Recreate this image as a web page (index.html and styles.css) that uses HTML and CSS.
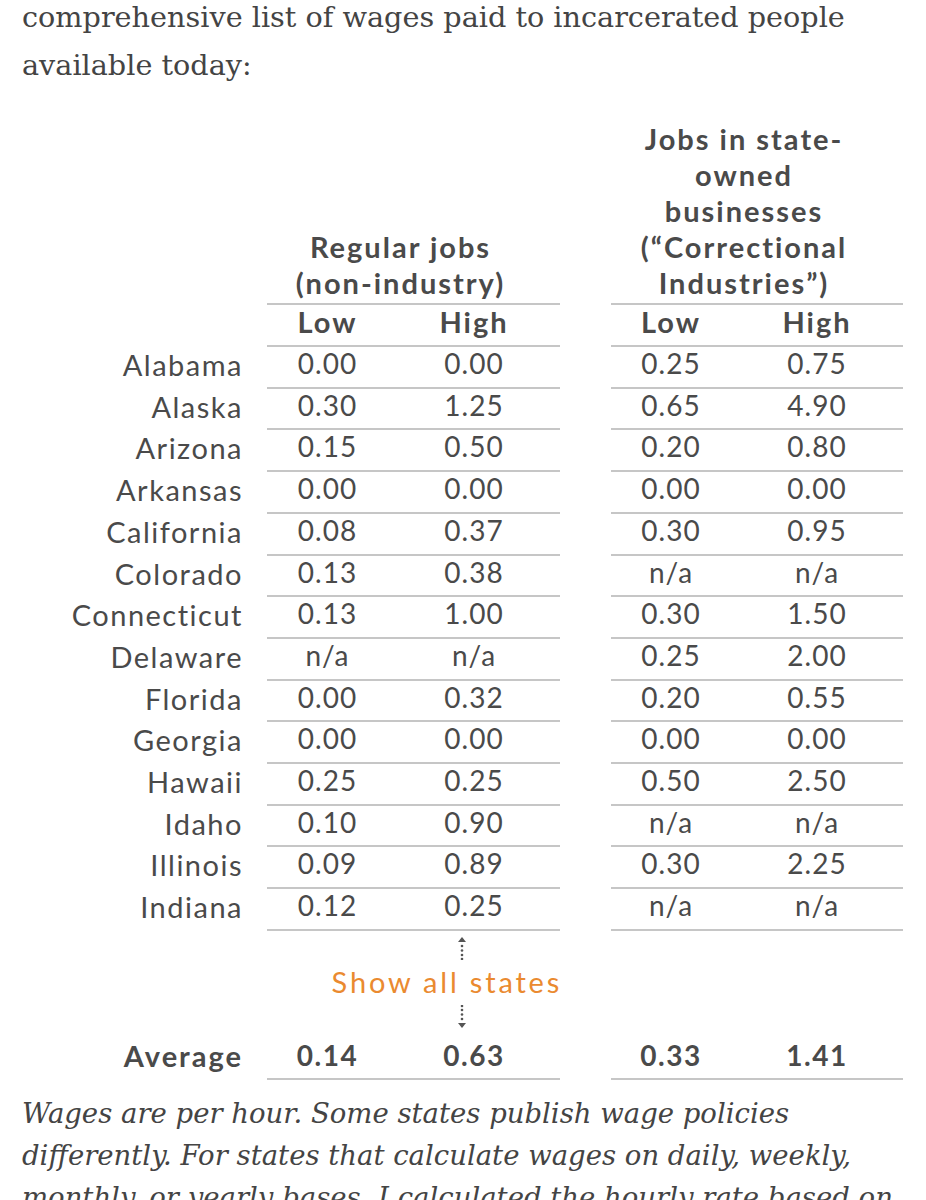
FILE: index.html
```html
<!DOCTYPE html>
<html>
<head>
<meta charset="utf-8">
<link rel="stylesheet" href="styles.css">
</head>
<body>
<div class="page">
  <p class="intro">comprehensive list of wages paid to incarcerated people available today:</p>
  <table class="wages">
    <colgroup>
      <col class="c-state"><col class="c-low"><col class="c-high"><col class="c-sp"><col class="c-low2"><col class="c-high2">
    </colgroup>
    <thead>
      <tr class="groups">
        <th class="state"></th>
        <th class="group" colspan="2">Regular jobs<br>(non-industry)</th>
        <th class="sp"></th>
        <th class="group" colspan="2">Jobs in state-<br>owned<br>businesses<br>(“Correctional<br>Industries”)</th>
      </tr>
      <tr class="sub">
        <th class="state"></th>
        <th class="num">Low</th><th class="num">High</th>
        <th class="sp"></th>
        <th class="num">Low</th><th class="num">High</th>
      </tr>
    </thead>
    <tbody>
      <tr><td class="state">Alabama</td><td class="num">0.00</td><td class="num">0.00</td><td class="sp"></td><td class="num">0.25</td><td class="num">0.75</td></tr>
      <tr><td class="state">Alaska</td><td class="num">0.30</td><td class="num">1.25</td><td class="sp"></td><td class="num">0.65</td><td class="num">4.90</td></tr>
      <tr><td class="state">Arizona</td><td class="num">0.15</td><td class="num">0.50</td><td class="sp"></td><td class="num">0.20</td><td class="num">0.80</td></tr>
      <tr><td class="state">Arkansas</td><td class="num">0.00</td><td class="num">0.00</td><td class="sp"></td><td class="num">0.00</td><td class="num">0.00</td></tr>
      <tr><td class="state">California</td><td class="num">0.08</td><td class="num">0.37</td><td class="sp"></td><td class="num">0.30</td><td class="num">0.95</td></tr>
      <tr><td class="state">Colorado</td><td class="num">0.13</td><td class="num">0.38</td><td class="sp"></td><td class="num">n/a</td><td class="num">n/a</td></tr>
      <tr><td class="state">Connecticut</td><td class="num">0.13</td><td class="num">1.00</td><td class="sp"></td><td class="num">0.30</td><td class="num">1.50</td></tr>
      <tr><td class="state">Delaware</td><td class="num">n/a</td><td class="num">n/a</td><td class="sp"></td><td class="num">0.25</td><td class="num">2.00</td></tr>
      <tr><td class="state">Florida</td><td class="num">0.00</td><td class="num">0.32</td><td class="sp"></td><td class="num">0.20</td><td class="num">0.55</td></tr>
      <tr><td class="state">Georgia</td><td class="num">0.00</td><td class="num">0.00</td><td class="sp"></td><td class="num">0.00</td><td class="num">0.00</td></tr>
      <tr><td class="state">Hawaii</td><td class="num">0.25</td><td class="num">0.25</td><td class="sp"></td><td class="num">0.50</td><td class="num">2.50</td></tr>
      <tr><td class="state">Idaho</td><td class="num">0.10</td><td class="num">0.90</td><td class="sp"></td><td class="num">n/a</td><td class="num">n/a</td></tr>
      <tr><td class="state">Illinois</td><td class="num">0.09</td><td class="num">0.89</td><td class="sp"></td><td class="num">0.30</td><td class="num">2.25</td></tr>
      <tr><td class="state">Indiana</td><td class="num">0.12</td><td class="num">0.25</td><td class="sp"></td><td class="num">n/a</td><td class="num">n/a</td></tr>
      <tr class="show">
        <td class="state"></td>
        <td class="toggle" colspan="2">
          <div class="toggle-box">
            <svg class="arrow" width="12" height="24" viewBox="0 0 12 24">
              <path d="M6 1 L10 6 L2 6 Z" fill="#555"/>
              <circle cx="6" cy="10" r="1.3" fill="#555"/>
              <circle cx="6" cy="14.5" r="1.3" fill="#555"/>
              <circle cx="6" cy="19" r="1.3" fill="#555"/>
              <circle cx="6" cy="23" r="1.3" fill="#555"/>
            </svg>
            <span class="show-link">Show all states</span>
            <svg class="arrow" width="12" height="24" viewBox="0 0 12 24">
              <circle cx="6" cy="1" r="1.3" fill="#555"/>
              <circle cx="6" cy="5" r="1.3" fill="#555"/>
              <circle cx="6" cy="9.5" r="1.3" fill="#555"/>
              <circle cx="6" cy="14" r="1.3" fill="#555"/>
              <path d="M2 18 L10 18 L6 23 Z" fill="#555"/>
            </svg>
          </div>
        </td>
        <td class="sp"></td>
        <td colspan="2"></td>
      </tr>
      <tr class="avg"><td class="state">Average</td><td class="num">0.14</td><td class="num">0.63</td><td class="sp"></td><td class="num">0.33</td><td class="num">1.41</td></tr>
    </tbody>
  </table>
  <p class="note">Wages are per hour. Some states publish wage policies differently. For states that calculate wages on daily, weekly, monthly, or yearly bases, I calculated the hourly rate based on a standard work week.</p>
</div>
</body>
</html>
```

FILE: styles.css
```css
html, body {
  margin: 0;
  padding: 0;
  background: #ffffff;
}

.page {
  width: 881px;
  padding: 0 23px 0 22px;
  color: #444444;
  overflow: hidden;
  height: 1200px;
}

.intro {
  margin: -7px 0 32px 0;
  font-family: "DejaVu Serif", "Liberation Serif", serif;
  font-size: 28.7px;
  line-height: 48px;
  color: #444444;
}

.wages {
  width: 881px;
  table-layout: fixed;
  border-collapse: separate;
  border-spacing: 0;
  font-family: Lato, "Noto Sans", sans-serif;
  font-size: 28px;
  letter-spacing: 1px;
  color: #4a4a4a;
}

.c-state { width: 245px; }
.c-low { width: 147px; }
.c-high { width: 146px; }
.c-sp { width: 51px; }
.c-low2 { width: 146px; }
.c-high2 { width: 146px; }

.wages th, .wages td {
  padding: 0 0 6px 0;
  line-height: 33.7px;
}

.wages .state {
  text-align: right;
  padding-right: 24px;
  font-weight: 400;
  font-size: 29px;
  letter-spacing: 1.5px;
}

.wages .num {
  text-align: center;
  padding-right: 26px;
  border-bottom: 2px solid #c6c6c6;
  font-weight: 400;
}

.wages .sp {
  border: none;
}

.groups th {
  vertical-align: bottom;
  line-height: 36px;
  padding-bottom: 2px;
}

.groups .group {
  font-weight: 700;
  font-size: 29px;
  letter-spacing: 2px;
  text-align: center;
  padding-right: 26px;
  border-bottom: 2px solid #c6c6c6;
}

.sub th {
  line-height: 34px;
}

.sub .num {
  font-weight: 700;
  font-size: 29px;
  letter-spacing: 2px;
}

.show td {
  height: 107px;
  padding: 0;
  line-height: 1;
  vertical-align: top;
}

.toggle-box {
  display: flex;
  flex-direction: column;
  align-items: flex-end;
  padding-top: 5px;
}

.arrow {
  display: block;
  margin-right: 92px;
}

.show-link {
  color: #ea8a30;
  font-size: 29px;
  letter-spacing: 2.8px;
  line-height: 34px;
  margin: 5px -2px 6px 0;
}

.avg td {
  line-height: 34px;
}

.avg .state {
  font-weight: 700;
  font-size: 29px;
  letter-spacing: 2px;
}

.avg .num {
  font-weight: 700;
  letter-spacing: 1.5px;
}

.note {
  margin: 12px 0 0 0;
  font-family: "DejaVu Serif", "Liberation Serif", serif;
  font-style: italic;
  font-size: 27.5px;
  line-height: 42px;
  color: #444444;
}
```
